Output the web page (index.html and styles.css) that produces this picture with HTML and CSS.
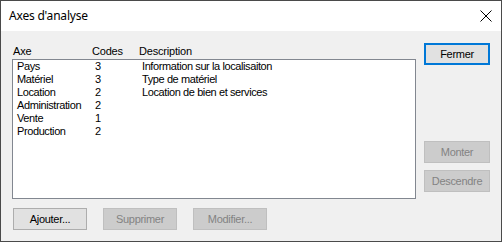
FILE: index.html
```html
<!DOCTYPE html>
<html lang="fr">
<head>
<meta charset="utf-8">
<title>Axes d'analyse</title>
<link rel="stylesheet" href="styles.css">
</head>
<body>
<div class="window">
  <div class="titlebar">
    <span class="title">Axes d'analyse</span>
    <svg class="close" width="12" height="12" viewBox="0 0 12 12"><path d="M0.5 0.5 L11.5 11.5 M11.5 0.5 L0.5 11.5" stroke="#000" stroke-width="1" fill="none"/></svg>
  </div>
  <div class="content">
    <div class="main">
      <div class="header">
        <span class="h-axe">Axe</span>
        <span class="h-codes">Codes</span>
        <span class="h-desc">Description</span>
      </div>
      <div class="listbox">
        <div class="row"><span class="c-axe">Pays</span><span class="c-codes">3</span><span class="c-desc">Information sur la localisaiton</span></div>
        <div class="row"><span class="c-axe">Matériel</span><span class="c-codes">3</span><span class="c-desc">Type de matériel</span></div>
        <div class="row"><span class="c-axe">Location</span><span class="c-codes">2</span><span class="c-desc">Location de bien et services</span></div>
        <div class="row"><span class="c-axe">Administration</span><span class="c-codes">2</span><span class="c-desc"></span></div>
        <div class="row"><span class="c-axe">Vente</span><span class="c-codes">1</span><span class="c-desc"></span></div>
        <div class="row"><span class="c-axe">Production</span><span class="c-codes">2</span><span class="c-desc"></span></div>
      </div>
      <div class="bottom">
        <button class="btn">Ajouter...</button>
        <button class="btn disabled">Supprimer</button>
        <button class="btn disabled">Modifier...</button>
      </div>
    </div>
    <div class="side">
      <button class="btn default">Fermer</button>
      <button class="btn disabled up">Monter</button>
      <button class="btn disabled">Descendre</button>
    </div>
  </div>
</div>
</body>
</html>
```
FILE: styles.css
```css
html, body {
  margin: 0;
  padding: 0;
  background: #ffffff;
}
.window {
  width: 500px;
  height: 240px;
  border: 1px solid #4a4a4a;
  display: flex;
  flex-direction: column;
  font-family: "Liberation Sans", Arial, sans-serif;
  font-size: 11px;
  color: #000;
}
.titlebar {
  height: 30px;
  background: #fff;
  display: flex;
  align-items: center;
  justify-content: space-between;
  padding: 0 8px 0 8px;
}
.title {
  font-family: "Noto Sans", "Open Sans", sans-serif;
  font-size: 12px;
  letter-spacing: -0.2px;
  margin-top: -1px;
}
.close {
  margin-right: 1px;
  margin-top: -1px;
}
.content {
  flex: 1;
  background: #f0f0f0;
  display: flex;
  padding: 12px 11px 0 11px;
  gap: 8px;
}
.main {
  width: 404px;
  display: flex;
  flex-direction: column;
}
.header {
  height: 16px;
  display: flex;
  align-items: center;
  padding-left: 1px;
  letter-spacing: -0.2px;
}
.h-axe { width: 79px; }
.h-codes { width: 47px; }
.listbox {
  height: 138px;
  background: #fff;
  border: 1px solid #828790;
  padding: 0 0 0 4px;
}
.row {
  display: flex;
  height: 13px;
  line-height: 13px;
  letter-spacing: -0.4px;
}
.c-axe { width: 78px; flex: none; }
.c-codes { width: 47px; flex: none; }
.bottom {
  display: flex;
  gap: 16px;
  margin-top: 9px;
  padding-left: 1px;
}
.btn {
  font-family: "Liberation Sans", Arial, sans-serif;
  font-size: 11px;
  letter-spacing: -0.3px;
  color: #000;
  background: #e1e1e1;
  border: 1px solid #adadad;
  width: 74px;
  height: 22px;
  padding: 0;
  margin: 0;
  box-sizing: border-box;
}
.btn.disabled {
  background: #cccccc;
  border-color: #bfbfbf;
  color: #838383;
}
.btn.default {
  border: 2px solid #0078d7;
  width: 66px;
}
.side {
  display: flex;
  flex-direction: column;
  gap: 7px;
}
.side .btn {
  width: 66px;
}
.side .up {
  margin-top: 69px;
}
```
